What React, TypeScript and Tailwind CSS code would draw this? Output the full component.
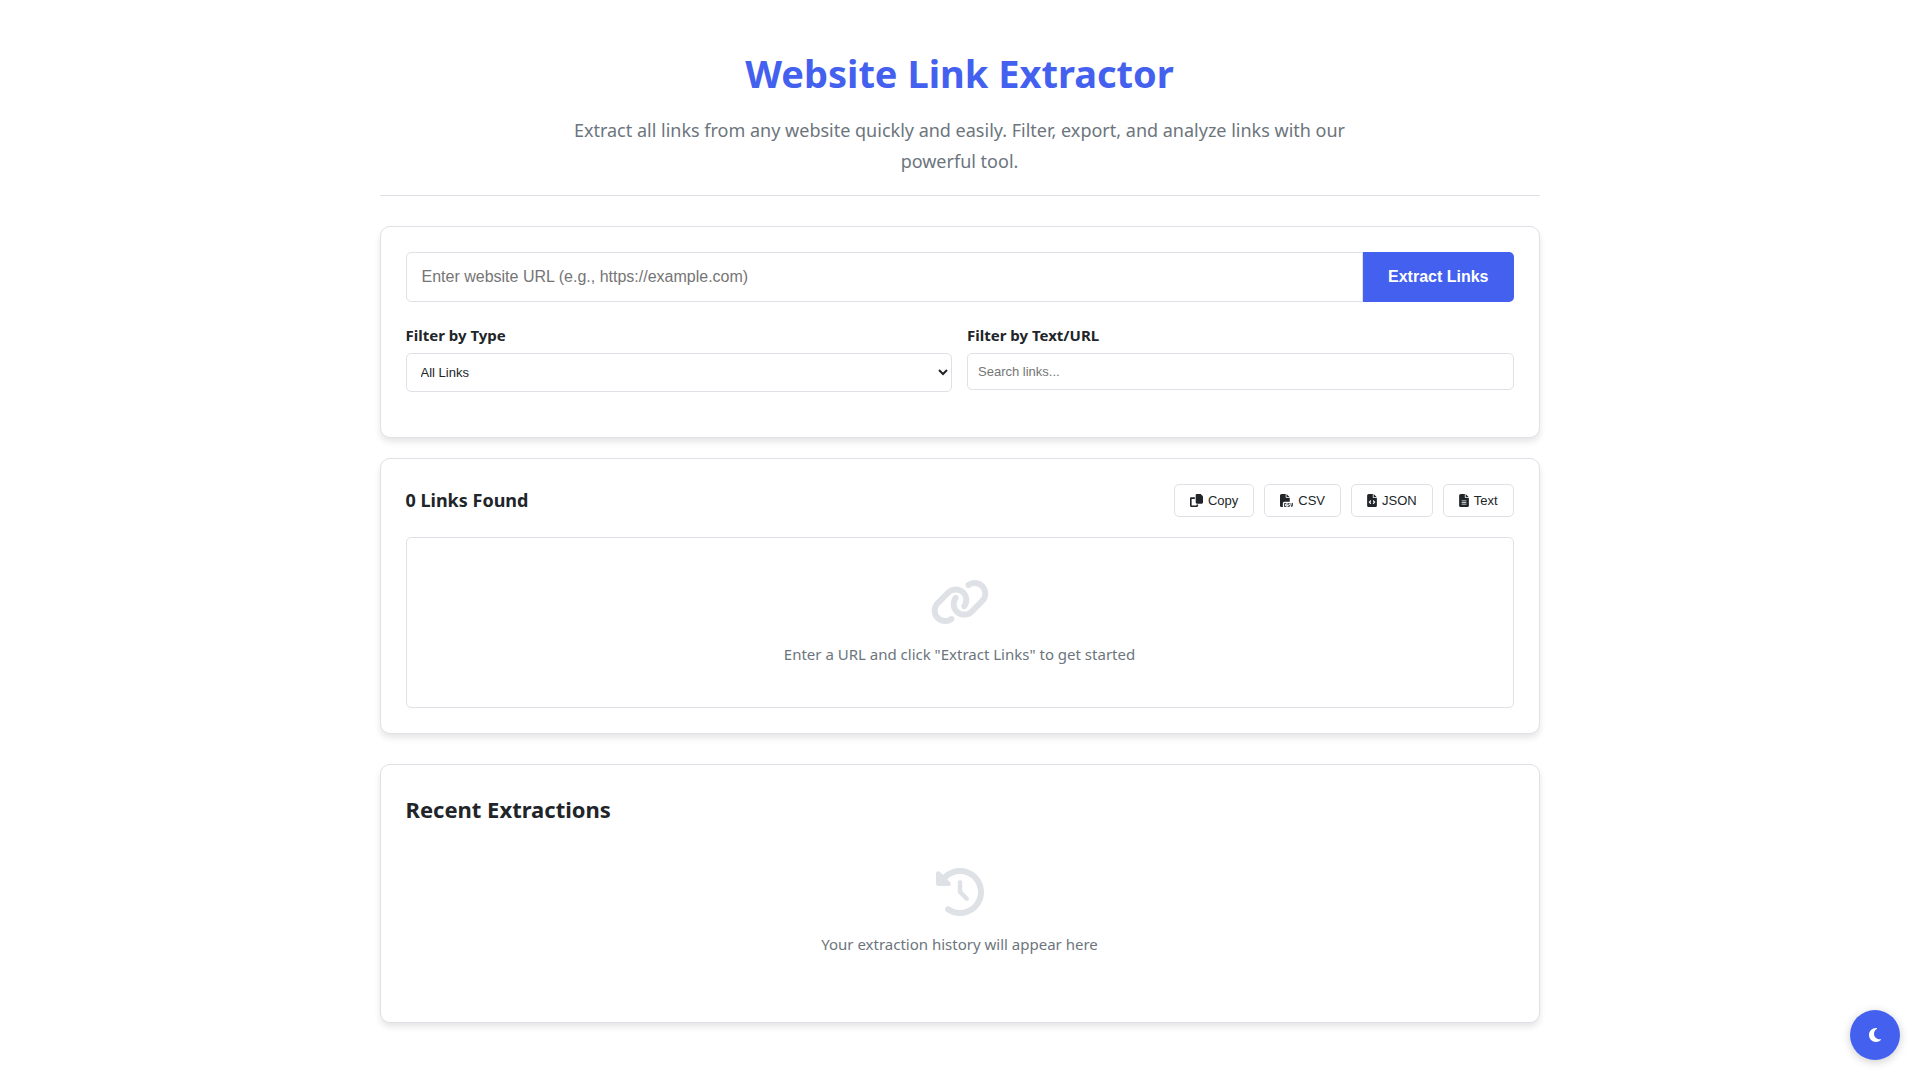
import type { ReactNode } from 'react';
import type { IconType } from 'react-icons';
import { FaClockRotateLeft, FaFileCode, FaFileCsv, FaFileLines, FaLink, FaMoon } from 'react-icons/fa6';

function CopyIcon({ className }: { className?: string }) {
  return (
    <svg viewBox="0 0 512 512" fill="currentColor" aria-hidden="true" className={className}>
      <path d="M272 0H396.1c12.7 0 24.9 5.1 33.9 14.1l67.9 67.9c9 9 14.1 21.2 14.1 33.9V336c0 26.5-21.5 48-48 48H272c-26.5 0-48-21.5-48-48V48c0-26.5 21.5-48 48-48zM48 128H192v64H64V448H256V416h64v48c0 26.5-21.5 48-48 48H48c-26.5 0-48-21.5-48-48V176c0-26.5 21.5-48 48-48z" />
    </svg>
  );
}

const EXPORTS = [
  { label: 'Copy', icon: <CopyIcon className="size-[13px]" /> },
  { label: 'CSV', icon: <FaFileCsv className="size-[13px]" /> },
  { label: 'JSON', icon: <FaFileCode className="h-[13px] w-2.5" /> },
  { label: 'Text', icon: <FaFileLines className="h-[13px] w-2.5" /> },
];

function Card({ className = '', children }: { className?: string; children: ReactNode }) {
  return (
    <section className={`rounded-[10px] border border-[#dee2e6] bg-white p-[25px] shadow-[0_4px_6px_rgba(0,0,0,0.1)] ${className}`}>
      {children}
    </section>
  );
}

function EmptyState({ icon: Icon, iconWidth, children }: { icon: IconType; iconWidth: string; children: ReactNode }) {
  return (
    <div className="flex flex-col items-center p-10 text-center text-[#6c757d]">
      <Icon className={`mb-[15px] h-12 text-[#dee2e6] ${iconWidth}`} />
      <p className="text-[15px] leading-[26px]">{children}</p>
    </div>
  );
}

export default function App() {
  return (
    <div className="min-h-screen bg-white font-['Noto_Sans',sans-serif] text-[#212529]">
      <div className="mx-auto max-w-[1200px] p-5">
        <header className="mb-[30px] border-b border-[#dee2e6] pt-[21px] pb-[18px] text-center">
          <h1 className="mb-2.5 text-[38px] leading-[64px] font-bold text-[#4361ee]">Website Link Extractor</h1>
          <p className="mx-auto max-w-[800px] text-[18px] leading-[31px] text-[#6c757d]">
            Extract all links from any website quickly and easily. Filter, export, and analyze links with our powerful tool.
          </p>
        </header>

        <main>
          <Card className="mb-5">
            <form className="mb-5 flex h-[50px]" onSubmit={(e) => e.preventDefault()}>
              <input
                type="url"
                aria-label="Website URL"
                placeholder="Enter website URL (e.g., https://example.com)"
                className="min-w-0 flex-1 rounded-l-[5px] border border-[#dee2e6] px-[15px] font-['Liberation_Sans',sans-serif] text-base placeholder:text-[#757575]"
              />
              <button type="submit" className="rounded-r-[5px] bg-[#4361ee] px-[25px] font-['Liberation_Sans',sans-serif] text-base font-bold text-white">
                Extract Links
              </button>
            </form>
            <div className="mb-5 grid grid-cols-2 items-start gap-[15px]">
              <div>
                <label htmlFor="type" className="mb-[5px] block text-[15px] leading-[26px] font-bold">Filter by Type</label>
                <select id="type" className="block h-[39px] w-full rounded-[5px] border border-[#dee2e6] bg-white px-2.5 font-['Liberation_Sans',sans-serif] text-[13px]">
                  <option>All Links</option>
                  <option>Internal Links</option>
                  <option>External Links</option>
                </select>
              </div>
              <div>
                <label htmlFor="search" className="mb-[5px] block text-[15px] leading-[26px] font-bold">Filter by Text/URL</label>
                <input
                  id="search"
                  type="text"
                  placeholder="Search links..."
                  className="block h-[37px] w-full rounded-[5px] border border-[#dee2e6] px-2.5 font-['Liberation_Sans',sans-serif] text-[13px] placeholder:text-[#757575]"
                />
              </div>
            </div>
          </Card>

          <Card className="mb-[30px]">
            <div className="mb-5 flex items-center justify-between">
              <h2 className="text-[18px] leading-[33px] font-bold">0 Links Found</h2>
              <div className="flex gap-2.5">
                {EXPORTS.map(({ label, icon }) => (
                  <button key={label} type="button" className="flex h-[33px] items-center gap-[5px] rounded-[5px] border border-[#dee2e6] bg-white px-[15px] font-['Liberation_Sans',sans-serif] text-[13px]">
                    {icon}
                    {label}
                  </button>
                ))}
              </div>
            </div>
            <div className="rounded-[5px] border border-[#dee2e6]">
              <EmptyState icon={FaLink} iconWidth="w-[60px]">Enter a URL and click "Extract Links" to get started</EmptyState>
            </div>
          </Card>

          <Card>
            <h2 className="text-[22px] leading-[38px] font-bold">Recent Extractions</h2>
            <EmptyState icon={FaClockRotateLeft} iconWidth="w-12">Your extraction history will appear here</EmptyState>
          </Card>
        </main>
      </div>

      <button
        type="button"
        aria-label="Toggle dark mode"
        className="fixed right-[19px] bottom-[19px] flex size-[50px] items-center justify-center rounded-full bg-[#4361ee] text-white shadow-[0_2px_10px_rgba(0,0,0,0.2)]"
      >
        <FaMoon className="h-4 w-3" />
      </button>
    </div>
  );
}
